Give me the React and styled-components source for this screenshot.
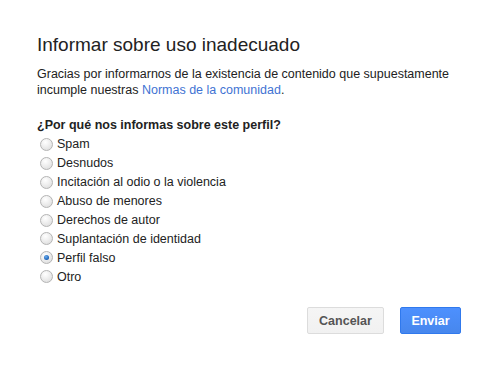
import styled, { createGlobalStyle } from "styled-components";

const GlobalStyle = createGlobalStyle`
  body {
    margin: 0;
    background: #fff;
    font-family: "Liberation Sans", Arial, sans-serif;
    color: #222;
  }
`;

const Dialog = styled.div`
  width: 500px;
  height: 368px;
  box-sizing: border-box;
  padding: 33px 39px 0 37px;
  display: flex;
  flex-direction: column;
`;

const Title = styled.h1`
  margin: 0;
  font-size: 19px;
  font-weight: normal;
  line-height: 23px;
  color: #222;
`;

const Desc = styled.p`
  margin: 10px 0 0;
  font-size: 12.5px;
  line-height: 16px;
  color: #222;
`;

const Link = styled.a`
  color: #3f73d3;
  text-decoration: none;
  cursor: pointer;
`;

const Question = styled.div`
  margin-top: 19px;
  font-size: 12.5px;
  font-weight: bold;
  line-height: 16px;
`;

const Options = styled.div`
  display: flex;
  flex-direction: column;
  margin-top: 2px;
`;

const Option = styled.label`
  display: flex;
  align-items: center;
  gap: 4px;
  height: 18.9px;
  padding-left: 3px;
  font-size: 12.5px;
  color: #222;
  cursor: pointer;
`;

const Radio = styled.span`
  width: 11px;
  height: 11px;
  border-radius: 50%;
  border: 1px solid #b4b4b4;
  background: radial-gradient(circle at 40% 30%, #fff 0%, #f0f0f0 40%, #d8d8d8 100%);
  display: flex;
  align-items: center;
  justify-content: center;
  flex-shrink: 0;

  &::after {
    content: "";
    width: 5px;
    height: 5px;
    border-radius: 50%;
    background: radial-gradient(circle at 40% 35%, #6aaef0 0%, #1a5fb4 70%, #0d3f86 100%);
    display: ${(p) => (p.checked ? "block" : "none")};
  }
`;

const Footer = styled.div`
  display: flex;
  justify-content: flex-end;
  gap: 16px;
  margin-top: 21px;
`;

const Button = styled.button`
  height: 27px;
  padding: 0;
  width: ${(p) => (p.primary ? "61px" : "77px")};
  border-radius: 2px;
  font-family: "Liberation Sans", Arial, sans-serif;
  font-size: 12.5px;
  font-weight: bold;
  cursor: pointer;
  border: 1px solid ${(p) => (p.primary ? "#3079ed" : "#dcdcdc")};
  background: ${(p) =>
    p.primary
      ? "linear-gradient(#4d90fe, #4787ed)"
      : "linear-gradient(#f5f5f5, #f1f1f1)"};
  color: ${(p) => (p.primary ? "#fff" : "#555")};
`;

const options = [
  "Spam",
  "Desnudos",
  "Incitación al odio o la violencia",
  "Abuso de menores",
  "Derechos de autor",
  "Suplantación de identidad",
  "Perfil falso",
  "Otro",
];

const App = () => {
  return (
    <>
      <GlobalStyle />
      <Dialog>
        <Title>Informar sobre uso inadecuado</Title>
        <Desc>
          Gracias por informarnos de la existencia de contenido que supuestamente
          <br />
          incumple nuestras <Link>Normas de la comunidad</Link>.
        </Desc>
        <Question>¿Por qué nos informas sobre este perfil?</Question>
        <Options>
          {options.map((o) => (
            <Option key={o}>
              <Radio checked={o === "Perfil falso"} />
              {o}
            </Option>
          ))}
        </Options>
        <Footer>
          <Button>Cancelar</Button>
          <Button primary>Enviar</Button>
        </Footer>
      </Dialog>
    </>
  );
};

export default App;
